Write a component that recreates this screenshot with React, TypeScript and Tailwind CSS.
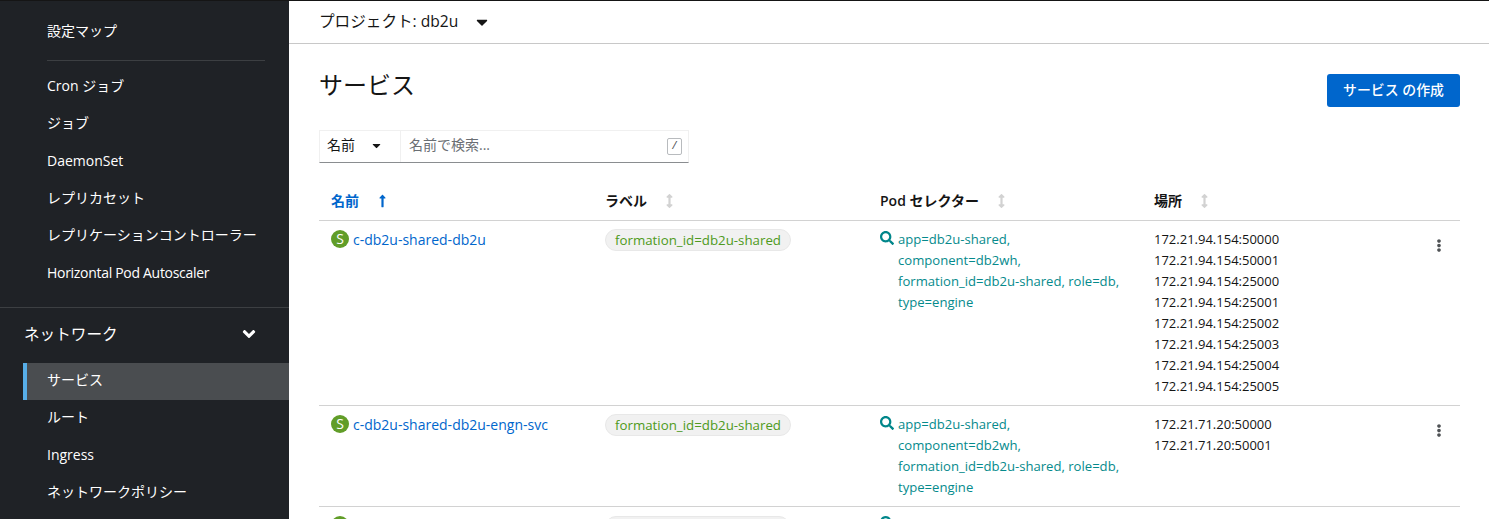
import { FaAngleDown, FaArrowsAltV, FaCaretDown, FaEllipsisV, FaLongArrowAltUp, FaSearch } from "react-icons/fa";

const font = "font-['Open_Sans','Noto_Sans_CJK_JP',sans-serif]";

const workloads = ["Cron ジョブ", "ジョブ", "DaemonSet", "レプリカセット", "レプリケーションコントローラー"];
const selector = ["app=db2u-shared,", "component=db2wh,", "formation_id=db2u-shared, role=db,", "type=engine"];

const services = [
  {
    name: "c-db2u-shared-db2u",
    locations: [
      "172.21.94.154:50000",
      "172.21.94.154:50001",
      "172.21.94.154:25000",
      "172.21.94.154:25001",
      "172.21.94.154:25002",
      "172.21.94.154:25003",
      "172.21.94.154:25004",
      "172.21.94.154:25005",
    ],
  },
  { name: "c-db2u-shared-db2u-engn-svc", locations: ["172.21.71.20:50000", "172.21.71.20:50001"] },
];

function NavItem({ label }: { label: string }) {
  return <div className="h-[37.2px] shrink-0 pl-[47px] pb-[3px] flex items-center text-sm text-white">{label}</div>;
}

function Sidebar() {
  return (
    <aside className="w-[289px] shrink-0 h-full bg-[#1f2226] overflow-hidden flex flex-col">
      <div className="-mt-[24.2px]">
        <NavItem label="シークレット" />
      </div>
      <NavItem label="設定マップ" />
      <div className="ml-[47px] mr-6 mt-[9px] mb-[8px] border-t border-[#3c3f42]" />
      {workloads.map((item) => (
        <NavItem key={item} label={item} />
      ))}
      <div className="h-[37.2px] shrink-0 pl-[47px] pb-[2px] flex items-center text-sm tracking-[-0.3px] text-white">
        Horizontal Pod Autoscaler
      </div>
      <div className="mt-[15px] border-t border-[#3c3f42]" />
      <div className="h-[52px] mb-[3px] shrink-0 pl-6 pr-[30px] flex items-center justify-between text-[15.6px] text-white">
        <span>ネットワーク</span>
        <FaAngleDown className="w-5 h-5" />
      </div>
      <div className="ml-[23px] h-[37px] shrink-0 pl-[20px] pb-[3px] flex items-center text-sm text-white bg-[#4a4d50] border-l-4 border-[#57aee8]">
        サービス
      </div>
      <NavItem label="ルート" />
      <NavItem label="Ingress" />
      <NavItem label="ネットワークポリシー" />
    </aside>
  );
}

function SortHeader({ label }: { label: string }) {
  return (
    <div className="pl-[11px] flex items-center gap-4 text-sm font-semibold text-[#151515]">
      <span>{label}</span>
      <FaArrowsAltV className="w-[13px] h-[14px] text-[#d2d2d2]" />
    </div>
  );
}

function ServiceRow({ name, locations }: { name: string; locations: string[] }) {
  return (
    <div className="grid grid-cols-[275px_275px_274px_1fr] border-b border-[#d2d2d2] py-2">
      <div className="pl-3 flex items-start gap-1">
        <span className="w-[18px] h-[18px] mt-px rounded-full bg-[#619d28] text-white text-sm flex items-center justify-center">
          S
        </span>
        <a className="text-sm leading-[21px] text-[#0066cc]">{name}</a>
      </div>
      <div className="pl-[11px]">
        <span className="block w-fit h-[22px] px-[9px] rounded-full bg-[#f1f1f1] border border-[#e8e8e8] text-[13.3px] leading-[20px] text-[#4e9a20]">
          formation_id=db2u-shared
        </span>
      </div>
      <div className="pl-[11px] flex items-start gap-1 text-[13.1px] leading-[21px] text-[#058a8c]">
        <FaSearch className="w-[14px] h-[14px] mt-[2px] shrink-0 text-[#00868a]" />
        <div>
          {selector.map((line) => (
            <div key={line}>{line}</div>
          ))}
        </div>
      </div>
      <div className="pl-[11px] flex justify-between text-[13px] leading-[21px] text-[#151515]">
        <div>
          {locations.map((loc) => (
            <div key={loc}>{loc}</div>
          ))}
        </div>
        <FaEllipsisV className="w-[14px] h-[13px] mt-[10px] mr-[14px] text-[#4f5255]" />
      </div>
    </div>
  );
}

export default function App() {
  return (
    <div className={`w-[1489px] h-[519px] flex overflow-hidden bg-white border-t border-[#151515] ${font}`}>
      <Sidebar />
      <main className="flex-1 min-w-0 h-full overflow-hidden">
        <div className="h-[43px] border-b border-[#c8c8c8] pl-[30px] flex items-center text-[15.6px] text-[#151515]">
          <span>プロジェクト: db2u</span>
          <FaCaretDown className="ml-[15px] w-[18px] h-[18px]" />
        </div>
        <div className="pl-[30px] pr-[29px]">
          <div className="mt-[30px] flex items-start justify-between">
            <h1 className="text-2xl leading-[22px] text-[#151515]">サービス</h1>
            <button className="h-[33px] w-[133px] rounded-[3px] bg-[#0066cc] text-white text-[13.9px] font-medium">
              サービス の作成
            </button>
          </div>
          <div className="mt-[23px] w-[370px] h-[33px] flex border border-[#f0f0f0] border-b-[#8a8d90] text-sm">
            <div className="w-[81px] pl-[7px] pr-[17px] pb-[3px] flex items-center justify-between border-r border-[#f0f0f0] text-[#151515]">
              <span>名前</span>
              <FaCaretDown className="w-[13px] h-[13px]" />
            </div>
            <div className="flex-1 pl-2 pr-[6px] flex items-center justify-between text-[#6a6e73]">
              <span className="pb-[3px]">名前で検索...</span>
              <kbd className="w-[15px] h-[17px] border border-[#b8bbbe] rounded-[2px] bg-white text-[11px] leading-[15px] text-center text-[#4f5255]">
                /
              </kbd>
            </div>
          </div>
          <div className="grid grid-cols-[275px_275px_274px_1fr] h-[58px] border-b border-[#d2d2d2] items-center pt-[18px]">
            <div className="pl-3 flex items-center gap-[17px] text-sm font-semibold text-[#0066cc]">
              <span>名前</span>
              <FaLongArrowAltUp className="w-[13px] h-[14px]" />
            </div>
            <SortHeader label="ラベル" />
            <SortHeader label="Pod セレクター" />
            <SortHeader label="場所" />
          </div>
          {services.map((service) => (
            <ServiceRow key={service.name} {...service} />
          ))}
          <div className="grid grid-cols-[275px_275px_274px_1fr] pt-[9px]">
            <div className="pl-3">
              <span className="block w-[18px] h-[18px] rounded-full bg-[#619d28]" />
            </div>
            <div className="pl-[11px]">
              <span className="block w-[185px] h-[22px] rounded-full bg-[#f1f1f1] border border-[#e8e8e8]" />
            </div>
            <div className="pl-[11px]">
              <FaSearch className="w-[14px] h-[14px] text-[#00868a]" />
            </div>
          </div>
        </div>
      </main>
    </div>
  );
}
